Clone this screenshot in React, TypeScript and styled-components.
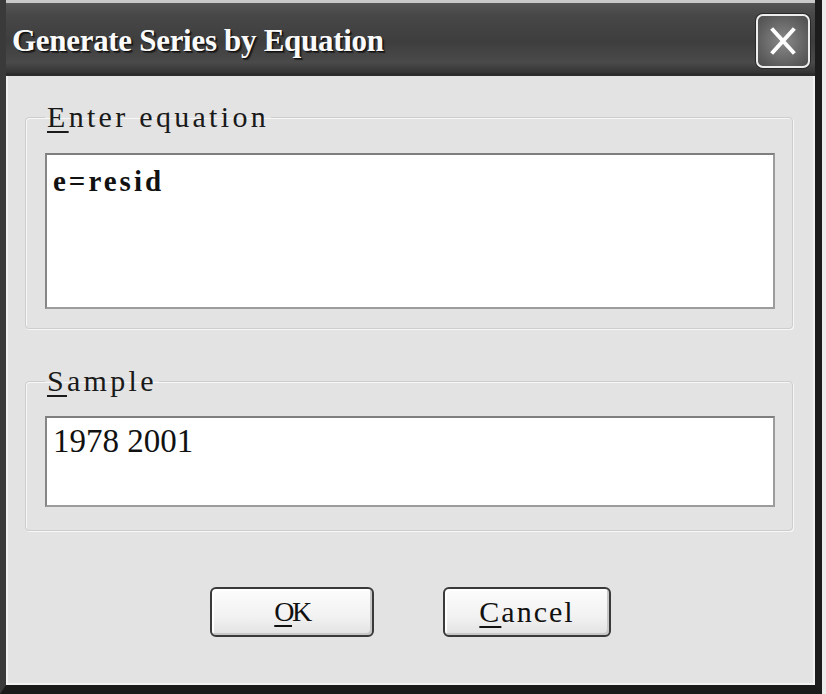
import styled, { createGlobalStyle } from "styled-components";

const Global = createGlobalStyle`
  html, body {
    margin: 0;
    padding: 0;
    background: #ececec;
  }
  body {
    font-family: "Liberation Serif", "Times New Roman", serif;
  }
`;

const Window = styled.div`
  width: 822px;
  height: 694px;
  box-sizing: border-box;
  display: flex;
  flex-direction: column;
  background: #e3e3e3;
  border-left: 6px solid #3a3a3a;
  border-right: 7px solid #1c1c1c;
  border-bottom: 9px solid #1a1a1a;
`;

const TitleBar = styled.div`
  height: 76px;
  box-sizing: border-box;
  display: flex;
  align-items: center;
  justify-content: space-between;
  padding: 5px 5px 0 6px;
  border-top: 3px solid #c9c9c9;
  border-bottom: 3px solid #2c2c2c;
  background: linear-gradient(
    #555 0%,
    #474747 18%,
    #3e3e3e 55%,
    #4a4a4a 85%,
    #333 100%
  );
`;

const Title = styled.div`
  font-family: "Liberation Serif", "Times New Roman", serif;
  font-weight: bold;
  font-size: 31px;
  letter-spacing: -0.3px;
  color: #fafafa;
  text-shadow: 1px 1px 0 #111, 2px 2px 1px #222;
  white-space: pre;
`;

const CloseButton = styled.div`
  width: 54px;
  height: 54px;
  box-sizing: border-box;
  display: flex;
  align-items: center;
  justify-content: center;
  border: 2px solid #eeeeee;
  border-radius: 7px;
  background: radial-gradient(circle at 50% 50%, #8a8a8a, #5e5e5e 70%, #4e4e4e);
  box-shadow: 0 0 0 1px #2a2a2a;
`;

const Body = styled.div`
  flex: 1;
  display: flex;
  flex-direction: column;
  padding: 28px 22px 0 19px;
  box-shadow: inset 2px 0 0 #f1f1f1, inset -2px 0 0 #f1f1f1, inset 0 -2px 0 #f1f1f1;
`;

const Group = styled.fieldset<{ $gap?: number }>`
  margin: ${(p) => p.$gap ?? 0}px 0 0 0;
  padding: 0 17px ${(p) => (p.$gap ? 23 : 19)}px 19px;
  border: 1px solid #cdcdcd;
  border-radius: 4px;
  box-shadow: inset 1px 1px 0 #f7f7f7, 1px 1px 0 #f7f7f7;
  min-width: 0;
`;

const Legend = styled.legend`
  padding: 0 2px;
  font-size: 30px;
  line-height: 26px;
  letter-spacing: 3.3px;
  color: #1a1a1a;
  white-space: pre;
`;

const Key = styled.span`
  text-decoration: underline;
  text-decoration-thickness: 1.5px;
  text-underline-offset: 4px;
`;

const Field = styled.div<{ $h: number; $top: number; $bold?: boolean }>`
  height: ${(p) => p.$h}px;
  margin-top: ${(p) => p.$top}px;
  box-sizing: border-box;
  padding: ${(p) => (p.$bold ? 11 : 8)}px 6px;
  background: #fff;
  border: 2px solid #9c9c9c;
  border-top-color: #7e7e7e;
  border-left-color: #868686;
  font-size: ${(p) => (p.$bold ? 29 : 33)}px;
  line-height: 30px;
  letter-spacing: ${(p) => (p.$bold ? 3 : 0)}px;
  font-weight: ${(p) => (p.$bold ? "bold" : "normal")};
  color: #111;
`;

const Buttons = styled.div`
  display: flex;
  justify-content: center;
  gap: 69px;
  margin-top: 56px;
  padding-left: 3px;
`;

const Button = styled.div<{ $w: number; $size: number; $spacing: number }>`
  width: ${(p) => p.$w}px;
  height: 50px;
  box-sizing: border-box;
  display: flex;
  align-items: center;
  justify-content: center;
  border: 2px solid #3a3a3a;
  border-radius: 6px;
  background: linear-gradient(#fcfcfc, #f2f2f2 60%, #e2e2e2);
  box-shadow: inset -2px -2px 0 #c8c8c8, inset 2px 2px 0 #ffffff;
  font-size: ${(p) => p.$size}px;
  letter-spacing: ${(p) => p.$spacing}px;
  color: #111;
`;

export default function App() {
  return (
    <>
      <Global />
      <Window>
        <TitleBar>
          <Title>Generate Series by Equation</Title>
          <CloseButton>
            <svg width="26" height="28" viewBox="0 0 26 28">
              <path d="M3 3 L23 25 M23 3 L3 25" stroke="#fff" strokeWidth="4" strokeLinecap="square" />
            </svg>
          </CloseButton>
        </TitleBar>
        <Body>
          <Group>
            <Legend>
              <Key>E</Key>nter equation
            </Legend>
            <Field $h={156} $top={23} $bold>
              e=resid
            </Field>
          </Group>
          <Group $gap={39}>
            <Legend>
              <Key>S</Key>ample
            </Legend>
            <Field $h={91} $top={22}>
              1978 2001
            </Field>
          </Group>
          <Buttons>
            <Button $w={164} $size={28} $spacing={-2.5}>
              <Key>O</Key>K
            </Button>
            <Button $w={168} $size={30} $spacing={2}>
              <Key>C</Key>ancel
            </Button>
          </Buttons>
        </Body>
      </Window>
    </>
  );
}
